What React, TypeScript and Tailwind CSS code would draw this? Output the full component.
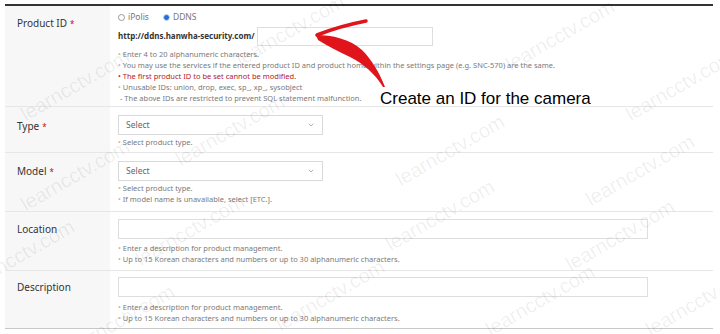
import { ChevronDown } from "lucide-react";

const font = { fontFamily: '"Noto Sans", "Open Sans", sans-serif' };

function Star() {
  return <span className="ml-[3px] text-[8px] text-[#d0021b]">*</span>;
}

function Hint({ children, red }: { children: React.ReactNode; red?: boolean }) {
  return (
    <div className={red ? "text-[#b3202a]" : "text-[#7a7a7a]"}>
      <span className={red ? "text-[#d0021b]" : "text-[#c9a9a9]"}>•</span> {children}
    </div>
  );
}

function Select() {
  return (
    <div className="flex h-[20px] w-[205px] items-center justify-between border border-[#d9d9d9] bg-white px-[7px] text-[8.5px] text-[#666]">
      <span>Select</span>
      <ChevronDown size={8} strokeWidth={2} className="text-[#888]" />
    </div>
  );
}

function Row({
  label,
  star,
  height,
  labelPad,
  last,
  children,
}: {
  label: string;
  star?: boolean;
  height: string;
  labelPad: string;
  last?: boolean;
  children: React.ReactNode;
}) {
  return (
    <div className={`flex ${height} ${last ? "" : "border-b border-[#e6e6e6]"}`}>
      <div className={`w-[105px] shrink-0 bg-[#f7f7f7] pl-[12px] text-[10px] text-[#333] ${labelPad}`}>
        {label}
        {star && <Star />}
      </div>
      <div className="flex-1 pl-[8px]">{children}</div>
    </div>
  );
}

// watermark centres, read off the screenshot
const marks: [number, number][] = [
  [75, 85],
  [290, 30],
  [560, 35],
  [680, 85],
  [230, 130],
  [450, 150],
  [640, 170],
  [75, 175],
  [190, 230],
  [20, 255],
  [440, 215],
  [620, 235],
  [330, 295],
  [540, 300],
  [700, 300],
  [120, 320],
];

export default function App() {
  return (
    <div className="relative h-[334px] w-[720px] overflow-hidden bg-white pt-[4px] pl-[5px] pr-[7px]" style={font}>
      <div className="border-t-2 border-b border-t-[#333] border-b-[#c8c8c8]">
        <Row label="Product ID" star height="h-[101px]" labelPad="pt-[10px]">
          <div className="flex items-center gap-[14px] pt-[5px] text-[8.5px] text-[#777]">
            <label className="flex items-center gap-[3px]">
              <span className="h-[7px] w-[7px] rounded-full border border-[#999] bg-white" />
              iPolis
            </label>
            <label className="flex items-center gap-[3px]">
              <span className="h-[7px] w-[7px] rounded-full border border-[#c9dbf5] bg-[#1f6fd8]" />
              DDNS
            </label>
          </div>
          <div className="mt-[3px] flex items-center gap-[2px]">
            <span className="text-[8px] font-bold text-[#333]">http://ddns.hanwha-security.com/</span>
            <div className="h-[19px] w-[176px] border border-[#dedede] bg-white" />
          </div>
          <div className="mt-[3px] text-[7.5px] leading-[11px]">
            <Hint>Enter 4 to 20 alphanumeric characters.</Hint>
            <Hint>
              You may use the services if the entered product ID and product home within the settings page (e.g. SNC-570)
              are the same.
            </Hint>
            <Hint red>The first product ID to be set cannot be modified.</Hint>
            <Hint>Unusable IDs: union, drop, exec, sp_, xp_, sysobject</Hint>
            <div className="pl-[2px] text-[#7a7a7a]">- The above IDs are restricted to prevent SQL statement malfunction.</div>
          </div>
        </Row>

        <Row label="Type" star height="h-[46px]" labelPad="pt-[12px]">
          <div className="pt-[8px]">
            <Select />
          </div>
          <div className="mt-[2px] text-[7.5px] leading-[11px]">
            <Hint>Select product type.</Hint>
          </div>
        </Row>

        <Row label="Model" star height="h-[59px]" labelPad="pt-[11px]">
          <div className="pt-[8px]">
            <Select />
          </div>
          <div className="mt-[2px] text-[7.5px] leading-[11px]">
            <Hint>Select product type.</Hint>
            <Hint>If model name is unavailable, select [ETC.].</Hint>
          </div>
        </Row>

        <Row label="Location" height="h-[59px]" labelPad="pt-[10px]">
          <div className="pt-[7px]">
            <div className="h-[20px] w-[530px] border border-[#dedede] bg-white" />
          </div>
          <div className="mt-[4px] text-[7.5px] leading-[11px]">
            <Hint>Enter a description for product management.</Hint>
            <Hint>Up to 15 Korean characters and numbers or up to 30 alphanumeric characters.</Hint>
          </div>
        </Row>

        <Row label="Description" last height="h-[57px]" labelPad="pt-[9px]">
          <div className="pt-[6px]">
            <div className="h-[20px] w-[530px] border border-[#dedede] bg-white" />
          </div>
          <div className="mt-[5px] text-[7.5px] leading-[11px]">
            <Hint>Enter a description for product management.</Hint>
            <Hint>Up to 15 Korean characters and numbers or up to 30 alphanumeric characters.</Hint>
          </div>
        </Row>
      </div>

      {/* annotation */}
      <svg className="pointer-events-none absolute left-0 top-0" width="720" height="334" viewBox="0 0 720 334">
        <path d="M317 35 Q340 26 366 21" fill="none" stroke="#e0141b" strokeWidth="3.5" strokeLinecap="round" />
        <path
          d="M316 35 C332 35 350 39 362 50 C372 60 379 72 385 87 L383 87 C375 74 364 64 350 57 C338 51 327 46 318 40 Z"
          fill="#e0141b"
        />
      </svg>
      <div
        className="pointer-events-none absolute left-[380px] top-[86px] text-[17px] text-black"
        style={{ fontFamily: '"Liberation Sans", Arial, sans-serif' }}
      >
        Create an ID for the camera
      </div>

      {/* watermark */}
      {marks.map(([x, y], i) => (
        <span
          key={i}
          className="pointer-events-none absolute -translate-x-1/2 -translate-y-1/2 -rotate-[30deg] whitespace-nowrap text-[20px] text-black/[0.07]"
          style={{ left: x, top: y, fontFamily: '"Liberation Sans", Arial, sans-serif' }}
        >
          learncctv.com
        </span>
      ))}
    </div>
  );
}
